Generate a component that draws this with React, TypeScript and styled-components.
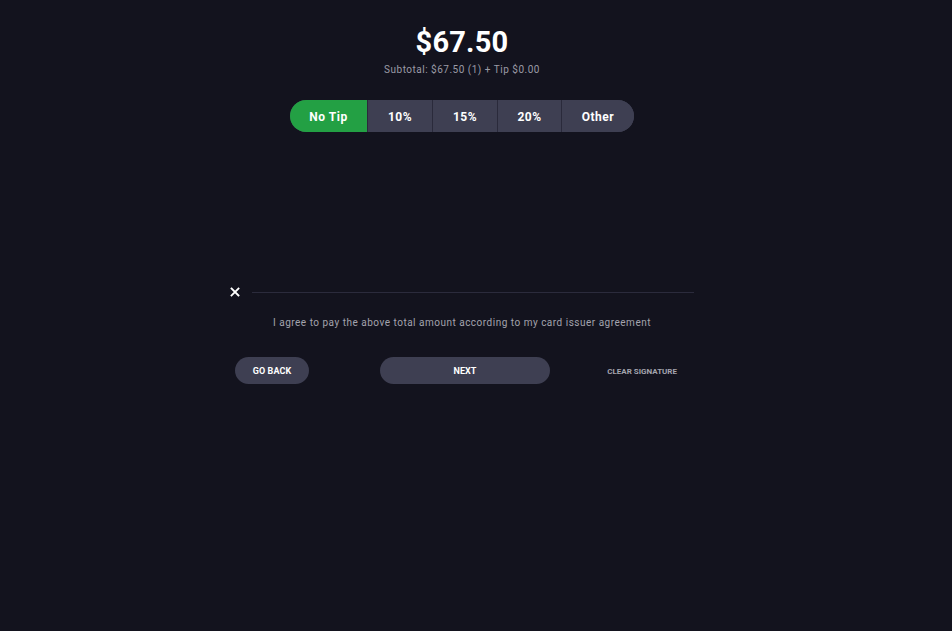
import styled, { createGlobalStyle } from "styled-components";

const GlobalStyle = createGlobalStyle`
  html, body {
    margin: 0;
    padding: 0;
    background: #13131e;
    font-family: Roboto, "Liberation Sans", sans-serif;
    color: #ffffff;
  }
`;

const tips = ["No Tip", "10%", "15%", "20%", "Other"];
const widths = [77, 65, 65, 64, 73];

const App = () => {
  return (
    <Page>
      <GlobalStyle />
      <Column>
        <Total>$67.50</Total>
        <Subtotal>Subtotal: $67.50 (1) + Tip $0.00</Subtotal>
        <TipBar>
          {tips.map((t, i) => (
            <TipButton key={t} $active={i === 0} style={{ width: widths[i] }}>
              {t}
            </TipButton>
          ))}
        </TipBar>
        <SignatureArea>
          <SignRow>
            <Cross viewBox="0 0 10 10">
              <path d="M1.5 1.5 L8.5 8.5 M8.5 1.5 L1.5 8.5" stroke="#fff" strokeWidth="1.8" strokeLinecap="square" />
            </Cross>
            <SignLine />
          </SignRow>
          <Agreement>I agree to pay the above total amount according to my card issuer agreement</Agreement>
          <Actions>
            <PillButton $wide={false}>GO BACK</PillButton>
            <PillButton $wide>NEXT</PillButton>
            <ClearButton>CLEAR SIGNATURE</ClearButton>
          </Actions>
        </SignatureArea>
      </Column>
    </Page>
  );
};

export default App;

const Page = styled.div`
  min-height: 631px;
  padding-right: 28px;
  box-sizing: border-box;
`;

const Column = styled.div`
  display: flex;
  flex-direction: column;
  align-items: center;
  padding-top: 24px;
`;

const Total = styled.div`
  font-size: 29px;
  font-weight: 700;
  line-height: 36px;
  letter-spacing: 0.2px;
`;

const Subtotal = styled.div`
  margin-top: 3px;
  font-size: 10px;
  line-height: 13px;
  color: #9b9ba6;
  letter-spacing: 0.5px;
`;

const TipBar = styled.div`
  display: flex;
  margin-top: 24px;
  height: 32px;
  border-radius: 16px;
  overflow: hidden;
  background: #3e3f52;
`;

const TipButton = styled.div<{ $active: boolean }>`
  display: flex;
  align-items: center;
  justify-content: center;
  padding-top: 2px;
  box-sizing: border-box;
  font-size: 12px;
  font-weight: 700;
  letter-spacing: 0.5px;
  background: ${(p) => (p.$active ? "#23a044" : "#3e3f52")};
  & + & {
    border-left: 1px solid #2a2a3b;
  }
`;

const SignatureArea = styled.div`
  width: 460px;
  margin-top: 155px;
  margin-left: 4px;
  display: flex;
  flex-direction: column;
`;

const SignRow = styled.div`
  display: flex;
  align-items: center;
  gap: 12px;
`;

const Cross = styled.svg`
  width: 10px;
  height: 10px;
  flex: none;
  margin-left: -4px;
`;

const SignLine = styled.div`
  flex: 1;
  height: 1px;
  background: #2b2b3c;
`;

const Agreement = styled.div`
  margin-top: 19px;
  margin-right: 4px;
  text-align: center;
  font-size: 10px;
  line-height: 13px;
  color: #a3a3ad;
  letter-spacing: 0.5px;
`;

const Actions = styled.div`
  display: grid;
  grid-template-columns: 1fr auto 1fr;
  align-items: center;
  margin-top: 28px;
`;

const PillButton = styled.div<{ $wide: boolean }>`
  justify-self: ${(p) => (p.$wide ? "center" : "start")};
  width: ${(p) => (p.$wide ? "170px" : "74px")};
  height: 27px;
  margin-left: ${(p) => (p.$wide ? "2px" : "1px")};
  padding-top: 1px;
  box-sizing: border-box;
  border-radius: 14px;
  background: #3e3f52;
  display: flex;
  align-items: center;
  justify-content: center;
  font-size: 9px;
  font-weight: 700;
  letter-spacing: 0.1px;
`;

const ClearButton = styled.div`
  justify-self: end;
  margin-right: 17px;
  padding-top: 1px;
  font-size: 8px;
  font-weight: 700;
  color: #a4a4ae;
`;
